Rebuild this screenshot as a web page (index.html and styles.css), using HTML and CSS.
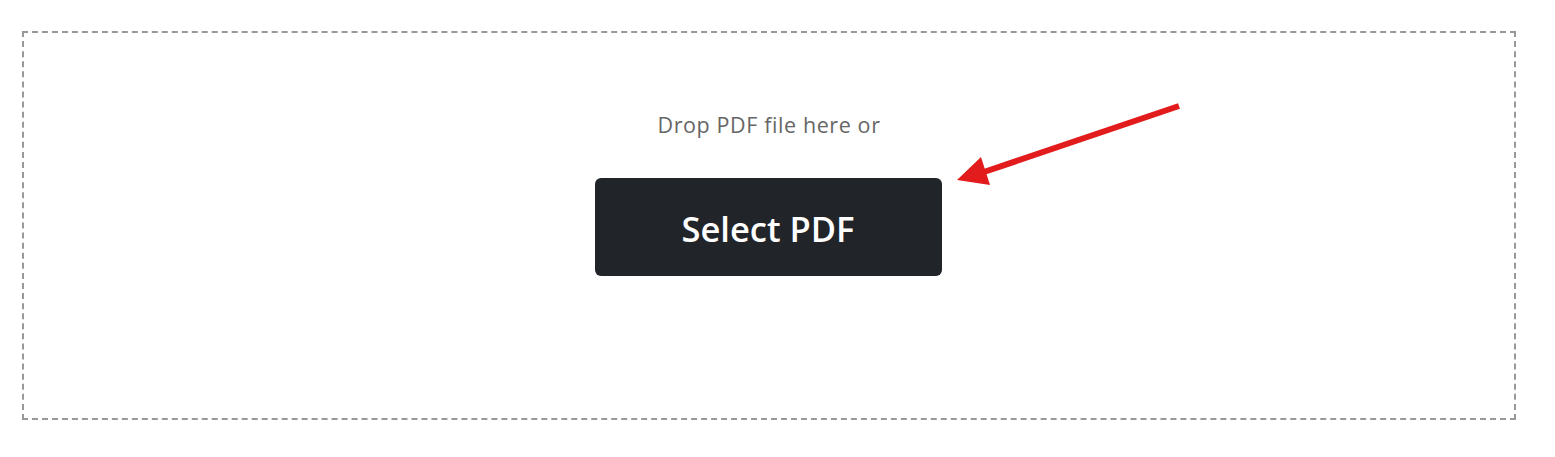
FILE: index.html
```html
<!DOCTYPE html>
<html>
<head>
<meta charset="utf-8">
<link rel="stylesheet" href="styles.css">
</head>
<body>
<div class="page">
  <div class="dropzone">
    <p class="hint">Drop PDF file here or</p>
    <button class="select-btn" type="button">Select PDF</button>
  </div>
  <svg class="arrow" width="1555" height="457" viewBox="0 0 1555 457" aria-hidden="true">
    <line x1="1179" y1="106" x2="978" y2="174" stroke="#e21c1c" stroke-width="6"/>
    <polygon points="957,180 981,157 990,185" fill="#e21c1c"/>
  </svg>
</div>
</body>
</html>
```
FILE: styles.css
```css
html, body {
  margin: 0;
  padding: 0;
  background: #fff;
}
.page {
  position: relative;
  width: 1555px;
  height: 457px;
  padding: 31px 0 0 22px;
  box-sizing: border-box;
  font-family: "Open Sans", "Noto Sans", sans-serif;
}
.dropzone {
  width: 1494px;
  height: 389px;
  box-sizing: border-box;
  border: 2px dashed #999;
  display: flex;
  flex-direction: column;
  align-items: center;
  padding-top: 77px;
}
.hint {
  margin: 0 0 38px 0;
  font-size: 21.5px;
  line-height: 30px;
  letter-spacing: 0.6px;
  color: #666;
}
.select-btn {
  width: 347px;
  height: 98px;
  margin-right: 2px;
  border: none;
  border-radius: 6px;
  background: #212529;
  color: #fff;
  font-family: "Open Sans", "Noto Sans", sans-serif;
  font-weight: 600;
  font-size: 34.5px;
  padding: 3px 0 0 0;
}
.arrow {
  position: absolute;
  left: 0;
  top: 0;
  pointer-events: none;
}
```
